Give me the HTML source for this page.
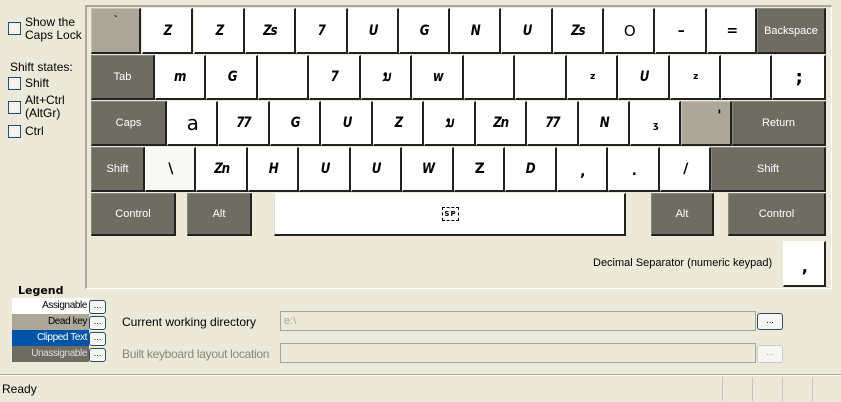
<!DOCTYPE html>
<html><head><meta charset="utf-8">
<style>
*{margin:0;padding:0;box-sizing:border-box}
body{width:841px;height:402px;background:#ECE9D8;font-family:"Liberation Sans",sans-serif;font-size:12px;position:relative;overflow:hidden;color:#000}
.a{position:absolute}
.panel{left:85px;top:5px;width:747px;height:284px;border-top:2px solid #aca899;border-left:2px solid #aca899;border-right:1px solid #fff;border-bottom:1px solid #fff}
.k{position:absolute;background:#fff;border-right:2px solid #222;border-bottom:2px solid #222;border-left:1px solid #fff;border-top:1px solid #fff;display:flex;align-items:center;justify-content:center;font-family:"DejaVu Sans",sans-serif;font-weight:bold;font-style:italic;font-size:14px;letter-spacing:-1.5px}
.k span.g{display:inline-block;transform:scaleX(0.85)}
.u{background:#6f6d62;color:#fff;font-family:"Liberation Sans",sans-serif;font-weight:normal;font-style:normal;font-size:11px;letter-spacing:0;border-left:1px solid #8a887d;border-top:1px solid #8a887d}
.d{background:#aca899;border-left:1px solid #c8c5b8;border-top:1px solid #c8c5b8}
.n{font-style:normal}
.cb{position:absolute;width:13px;height:13px;border:1px solid #1c5180;background:#f4f3ee}
.lbl{position:absolute;font-size:12px;line-height:13px}
.lg{position:absolute;left:12px;width:77px;height:16px;text-align:right;font-size:10px;line-height:16px;padding-right:2px;letter-spacing:-0.4px}
.btn{position:absolute;width:17px;height:14px;border:1px solid #2c4a6a;border-radius:3px;background:#f6f6f2;font-size:9px;line-height:9px;text-align:center}
.tf{position:absolute;left:280px;width:476px;height:20px;border:1px solid #a5a39a;background:#ECE9D8;color:#aca899;font-size:11px;line-height:18px;padding-left:3px}
</style></head><body>

<div class="cb" style="left:8px;top:22px"></div>
<div class="lbl" style="left:25px;top:16px">Show the<br>Caps Lock</div>
<div class="lbl" style="left:10px;top:61px">Shift states:</div>
<div class="cb" style="left:8px;top:77px"></div><div class="lbl" style="left:25px;top:77px">Shift</div>
<div class="cb" style="left:8px;top:101px"></div><div class="lbl" style="left:25px;top:94px">Alt+Ctrl<br>(AltGr)</div>
<div class="cb" style="left:8px;top:125px"></div><div class="lbl" style="left:25px;top:125px">Ctrl</div>

<div class="a panel"></div>

<!-- row1 -->
<div class="k d n" style="left:91px;top:8px;width:50px;height:46px;align-items:flex-start;padding-top:6px;font-size:10px">`</div>
<div class="k" style="left:142px;top:8px;width:51px;height:46px"><span class="g">Z</span></div>
<div class="k" style="left:194px;top:8px;width:51px;height:46px"><span class="g">Z</span></div>
<div class="k" style="left:245px;top:8px;width:51px;height:46px"><span class="g">Zs</span></div>
<div class="k" style="left:296px;top:8px;width:52px;height:46px"><span class="g">7</span></div>
<div class="k" style="left:348px;top:8px;width:51px;height:46px"><span class="g">U</span></div>
<div class="k" style="left:399px;top:8px;width:51px;height:46px"><span class="g">G</span></div>
<div class="k" style="left:450px;top:8px;width:51px;height:46px"><span class="g">N</span></div>
<div class="k" style="left:501px;top:8px;width:52px;height:46px"><span class="g">U</span></div>
<div class="k" style="left:553px;top:8px;width:51px;height:46px"><span class="g">Zs</span></div>
<div class="k n" style="left:604px;top:8px;width:51px;height:46px;font-weight:normal;font-size:15px">O</div>
<div class="k n" style="left:655px;top:8px;width:52px;height:46px">–</div>
<div class="k n" style="left:707px;top:8px;width:50px;height:46px">=</div>
<div class="k u" style="left:757px;top:8px;width:69px;height:46px">Backspace</div>
<!-- row2 -->
<div class="k u" style="left:91px;top:55px;width:64px;height:45px">Tab</div>
<div class="k" style="left:155px;top:55px;width:51px;height:45px"><span class="g">m</span></div>
<div class="k" style="left:206px;top:55px;width:52px;height:45px"><span class="g">G</span></div>
<div class="k" style="left:258px;top:55px;width:51px;height:45px"></div>
<div class="k" style="left:309px;top:55px;width:52px;height:45px"><span class="g">7</span></div>
<div class="k" style="left:361px;top:55px;width:51px;height:45px"><span class="g">ນ</span></div>
<div class="k" style="left:412px;top:55px;width:52px;height:45px"><span class="g">w</span></div>
<div class="k" style="left:464px;top:55px;width:51px;height:45px"></div>
<div class="k" style="left:515px;top:55px;width:52px;height:45px"></div>
<div class="k n" style="left:567px;top:55px;width:51px;height:45px;font-size:9px">z</div>
<div class="k" style="left:618px;top:55px;width:52px;height:45px"><span class="g">U</span></div>
<div class="k n" style="left:670px;top:55px;width:51px;height:45px;font-size:9px">z</div>
<div class="k" style="left:721px;top:55px;width:51px;height:45px"></div>
<div class="k n" style="left:772px;top:55px;width:54px;height:45px;font-size:18px">;</div>
<!-- row3 -->
<div class="k u" style="left:91px;top:101px;width:76px;height:45px">Caps</div>
<div class="k n" style="left:167px;top:101px;width:51px;height:45px;font-weight:normal;font-size:20px">a</div>
<div class="k" style="left:218px;top:101px;width:52px;height:45px"><span class="g">77</span></div>
<div class="k" style="left:270px;top:101px;width:51px;height:45px"><span class="g">G</span></div>
<div class="k" style="left:321px;top:101px;width:52px;height:45px"><span class="g">U</span></div>
<div class="k" style="left:373px;top:101px;width:51px;height:45px"><span class="g">Z</span></div>
<div class="k" style="left:424px;top:101px;width:52px;height:45px"><span class="g">ນ</span></div>
<div class="k" style="left:476px;top:101px;width:51px;height:45px"><span class="g">Zn</span></div>
<div class="k" style="left:527px;top:101px;width:52px;height:45px"><span class="g">77</span></div>
<div class="k" style="left:579px;top:101px;width:51px;height:45px"><span class="g">N</span></div>
<div class="k n" style="left:630px;top:101px;width:51px;height:45px;font-size:9px;padding-top:6px">ʒ</div>
<div class="k d n" style="left:681px;top:101px;width:51px;height:45px;justify-content:flex-end;padding-right:10px;align-items:flex-start;padding-top:6px">'</div>
<div class="k u" style="left:732px;top:101px;width:94px;height:45px">Return</div>
<!-- row4 -->
<div class="k u" style="left:91px;top:147px;width:54px;height:45px">Shift</div>
<div class="k n" style="left:145px;top:147px;width:51px;height:45px;background:#f8f8f4">\</div>
<div class="k" style="left:196px;top:147px;width:52px;height:45px"><span class="g">Zn</span></div>
<div class="k" style="left:248px;top:147px;width:51px;height:45px"><span class="g">H</span></div>
<div class="k" style="left:299px;top:147px;width:52px;height:45px"><span class="g">U</span></div>
<div class="k" style="left:351px;top:147px;width:51px;height:45px"><span class="g">U</span></div>
<div class="k" style="left:402px;top:147px;width:52px;height:45px"><span class="g">W</span></div>
<div class="k n" style="left:454px;top:147px;width:51px;height:45px">Z</div>
<div class="k" style="left:505px;top:147px;width:52px;height:45px"><span class="g">D</span></div>
<div class="k n" style="left:557px;top:147px;width:51px;height:45px;padding-top:6px">,</div>
<div class="k n" style="left:608px;top:147px;width:52px;height:45px;padding-top:4px">.</div>
<div class="k n" style="left:660px;top:147px;width:51px;height:45px">/</div>
<div class="k u" style="left:711px;top:147px;width:115px;height:45px">Shift</div>
<!-- row5 -->
<div class="k u" style="left:91px;top:193px;width:85px;height:43px">Control</div>
<div class="k u" style="left:187px;top:193px;width:65px;height:43px">Alt</div>
<div class="k n" style="left:274px;top:193px;width:352px;height:43px;border-left:1px solid #ddd"><span style="border:1px dashed #000;font-size:7px;font-weight:bold;padding:2px 1px;letter-spacing:1px;margin-left:2px">SP</span></div>
<div class="k u" style="left:651px;top:193px;width:63px;height:43px">Alt</div>
<div class="k u" style="left:728px;top:193px;width:98px;height:43px">Control</div>

<div class="lbl" style="left:593px;top:257px;font-size:11px">Decimal Separator (numeric keypad)</div>
<div class="k n" style="left:783px;top:241px;width:43px;height:46px;padding-top:6px;font-size:16px">,</div>

<!-- legend -->
<div class="lbl" style="left:18px;top:284px;font-weight:bold;font-family:'DejaVu Sans',sans-serif;font-size:11px">Legend</div>
<div class="lg" style="top:298px;background:#fff">Assignable</div>
<div class="lg" style="top:314px;background:#aca899">Dead key</div>
<div class="lg" style="top:330px;background:#0054a6;color:#fff">Clipped Text</div>
<div class="lg" style="top:346px;background:#6f6d62;color:#ddd">Unassignable</div>
<div class="btn" style="left:89px;top:300px">...</div>
<div class="btn" style="left:89px;top:316px">...</div>
<div class="btn" style="left:89px;top:332px">...</div>
<div class="btn" style="left:89px;top:348px">...</div>

<div class="lbl" style="left:122px;top:316px">Current working directory</div>
<div class="tf" style="top:311px">e:\</div>
<div class="btn" style="left:757px;top:313px;width:26px;height:17px;line-height:12px">...</div>
<div class="lbl" style="left:122px;top:348px;color:#8a887d;letter-spacing:-0.3px">Built keyboard layout location</div>
<div class="tf" style="top:343px"></div>
<div class="btn" style="left:757px;top:345px;width:26px;height:18px;border-color:#ccc;color:#aaa;line-height:12px">...</div>

<!-- status -->
<div class="a" style="left:0;top:374px;width:841px;height:1px;background:#aca899"></div>
<div class="a" style="left:0;top:375px;width:841px;height:1px;background:#fff"></div>
<div class="lbl" style="left:2px;top:383px">Ready</div>
<div class="a" style="left:722px;top:377px;width:1px;height:24px;background:#c9c6b8"></div>
<div class="a" style="left:752px;top:377px;width:1px;height:24px;background:#c9c6b8"></div>
<div class="a" style="left:782px;top:377px;width:1px;height:24px;background:#c9c6b8"></div>
<div class="a" style="left:812px;top:377px;width:1px;height:24px;background:#c9c6b8"></div>
</body></html>
